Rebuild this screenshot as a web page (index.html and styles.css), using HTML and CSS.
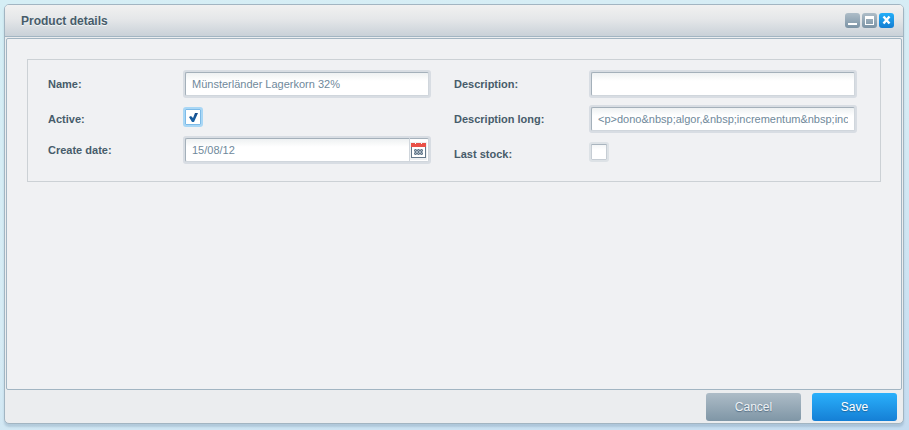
FILE: index.html
```html
<!DOCTYPE html>
<html lang="en">
<head>
    <meta charset="UTF-8">
    <meta name="viewport" content="width=device-width, initial-scale=1.0">
    <title>Product details</title>
    <link rel="stylesheet" href="styles.css">
</head>
<body>
    <form class="window">
        <header class="window-header">
            <h1 class="window-title">Product details</h1>
            <div class="window-tools">
                <button type="button" class="tool" aria-label="Minimize">
                    <svg viewBox="0 0 15 15"><path d="M3 10h9v2H3z" fill="#fff"/></svg>
                </button>
                <button type="button" class="tool" aria-label="Maximize">
                    <svg viewBox="0 0 15 15"><path fill-rule="evenodd" d="M3 3h9v9H3zM4 6v5h7V6z" fill="#fff"/></svg>
                </button>
                <button type="button" class="tool tool-close" aria-label="Close">
                    <svg viewBox="0 0 15 15"><path d="M4.5 3.5l6 7M10.5 3.5l-6 7" stroke="#fff" stroke-width="2.4" fill="none"/></svg>
                </button>
            </div>
        </header>

        <main class="window-body">
            <div class="fieldset">
                <div class="column">
                    <div class="field">
                        <label for="name">Name:</label>
                        <div class="control"><input type="text" id="name" value="Münsterländer Lagerkorn 32%"></div>
                    </div>
                    <div class="field field-check">
                        <label for="active">Active:</label>
                        <input type="checkbox" class="check" id="active" checked>
                    </div>
                    <div class="field">
                        <label for="created">Create date:</label>
                        <div class="control">
                            <input type="text" id="created" class="date-input" value="15/08/12">
                            <button type="button" class="date-trigger" aria-label="Pick a date">
                                <svg viewBox="0 0 17 18">
                                    <path d="M0 0h17v18H0z" fill="#eef0f2"/>
                                    <path d="M1 1h15v15H1z" fill="#64788a"/>
                                    <path d="M2 5h13v10H2z" fill="#fff"/>
                                    <path d="M1 1h15v4H1z" fill="#ea5148"/>
                                    <path d="M5 1h1v1H5zM11 1h1v1h-1z" fill="#fff"/>
                                    <path d="M4 7h9v6H4z" fill="#a8b6c2"/>
                                    <path d="M5 7h1v1H5zM8 7h1v1H8zM11 7h1v1h-1zM4 8h1v1H4zM6 8h2v1H6zM9 8h2v1H9zM12 8h1v1h-1zM5 9h1v2H5zM8 9h1v2H8zM11 9h1v2h-1zM4 11h1v1H4zM6 11h2v1H6zM9 11h2v1H9zM12 11h1v1h-1zM5 12h1v1H5zM8 12h1v1H8zM11 12h1v1h-1z" fill="#64788a"/>
                                </svg>
                            </button>
                        </div>
                    </div>
                </div>

                <div class="column column-last">
                    <div class="field">
                        <label for="description">Description:</label>
                        <div class="control"><input type="text" id="description"></div>
                    </div>
                    <div class="field">
                        <label for="description-long">Description long:</label>
                        <div class="control"><input type="text" id="description-long" value="&lt;p&gt;dono&amp;nbsp;algor,&amp;nbsp;incrementum&amp;nbsp;incipio"></div>
                    </div>
                    <div class="field field-check">
                        <label for="last-stock">Last stock:</label>
                        <input type="checkbox" class="check" id="last-stock">
                    </div>
                </div>
            </div>
        </main>

        <footer class="window-footer">
            <button type="button" class="btn btn-cancel">Cancel</button>
            <button type="button" class="btn btn-save">Save</button>
        </footer>
    </form>
</body>
</html>
```

FILE: styles.css
```css
* {
    margin: 0;
    padding: 0;
    box-sizing: border-box;
}

body {
    display: flex;
    min-height: 100vh;
    padding: 4px 5px 6px 4px;
    background: linear-gradient(165deg, #d5eef5 0%, #d7ecf5 50%, #c5dcf0 100%);
    font-family: "Liberation Sans", Arial, sans-serif;
    font-size: 11px;
    color: #475c6a;
}

button {
    border: none;
    font-family: inherit;
    cursor: pointer;
}

/* Window */
.window {
    flex: 1;
    min-width: 0;
    display: flex;
    flex-direction: column;
    border: 1px solid #a2b5c2;
    border-radius: 5px;
    background: #ebedef;
    box-shadow: 0 3px 2px rgba(110, 140, 165, 0.3);
}

.window-header {
    display: flex;
    align-items: center;
    justify-content: space-between;
    height: 32px;
    padding: 0 9px 0 16px;
    border-bottom: 1px solid #a2b5c2;
    border-radius: 4px 4px 0 0;
    background: linear-gradient(#f1f1f1, #e5e7e9 45%, #c9d1d8);
}

.window-title {
    font-size: 12px;
    line-height: 16px;
    text-shadow: 0 1px 0 #f4f6f8;
}

.window-tools {
    display: flex;
    gap: 2px;
}

.tool {
    width: 15px;
    height: 15px;
    border-radius: 3px;
    background: linear-gradient(#aebdc8, #7b93a5);
}

.tool-close {
    background: linear-gradient(#23aef8, #147dd2);
}

.tool svg {
    display: block;
    width: 100%;
    height: 100%;
}

.window-body {
    flex: 1;
    margin: 1px;
    padding: 20px;
    border: 1px solid #a2b5c2;
    border-radius: 2px;
    background: #f0f1f3;
}

/* Form */
.fieldset {
    display: flex;
    padding: 10px 20px 17px;
    border: 1px solid #ccd1d5;
}

.column {
    width: 50%;
    display: flex;
    flex-direction: column;
    gap: 7px;
    padding-right: 23px;
}

.column-last {
    padding-right: 3px;
}

.field {
    display: flex;
    height: 28px;
}

.field-check {
    height: 24px;
}

.field label {
    flex: 0 0 135px;
    font-weight: bold;
    line-height: 28px;
}

.control {
    flex: 1;
    min-width: 0;
    display: flex;
    border: 2px solid #d8dde3;
    border-radius: 3px;
    background: #d8dde3;
}

.control input {
    flex: 1;
    min-width: 0;
    padding: 0 6px;
    border: 1px solid;
    border-color: #a4b0ba #d0d6dc #d0d6dc #a4b0ba;
    border-radius: 2px;
    background: linear-gradient(#eef1f2, #fff 8px);
    font-family: inherit;
    font-size: 11px;
    color: #6f899b;
    outline: none;
}

.control .date-input {
    border-right: none;
    border-radius: 2px 0 0 2px;
}

.date-trigger {
    width: 20px;
    padding: 1px 1px 0 0;
    border: 1px solid #d0d6dc;
    border-top-color: #a4b0ba;
    border-radius: 0 2px 2px 0;
    background: #fff;
}

.date-trigger svg {
    display: block;
    width: 17px;
    height: 18px;
}

.check {
    appearance: none;
    width: 20px;
    height: 20px;
    margin-top: 2px;
    border: 2px solid #dde2e6;
    border-radius: 3px;
    background: linear-gradient(#f2f4f5, #fff 6px);
    box-shadow: inset 0 1px 0 #a9b4be, inset 0 0 0 1px #c6cdd4;
}

.check:checked {
    border-color: #a9d7f5;
    background: #fff;
    box-shadow: inset 0 0 0 1px #7dbbe8;
}

.check:checked::before {
    content: "";
    display: block;
    width: 16px;
    height: 16px;
    background: linear-gradient(#12407c, #1b6fb5);
    clip-path: polygon(4px 8px, 6px 7px, 8px 9px, 10px 4px, 13px 4px, 9px 13px, 7px 13px);
}

/* Footer */
.window-footer {
    display: flex;
    justify-content: flex-end;
    gap: 11px;
    padding: 2px 6px 2px;
}

.btn {
    height: 28px;
    border-radius: 3px;
    font-size: 12px;
    color: #fff;
    text-shadow: 0 1px 1px rgba(30, 60, 90, 0.5);
}

.btn-cancel {
    width: 95px;
    background: linear-gradient(#adbcc7, #7f96a6);
    color: #eef2f5;
}

.btn-save {
    width: 85px;
    background: linear-gradient(#2ab0fb, #157fd5);
}
```
